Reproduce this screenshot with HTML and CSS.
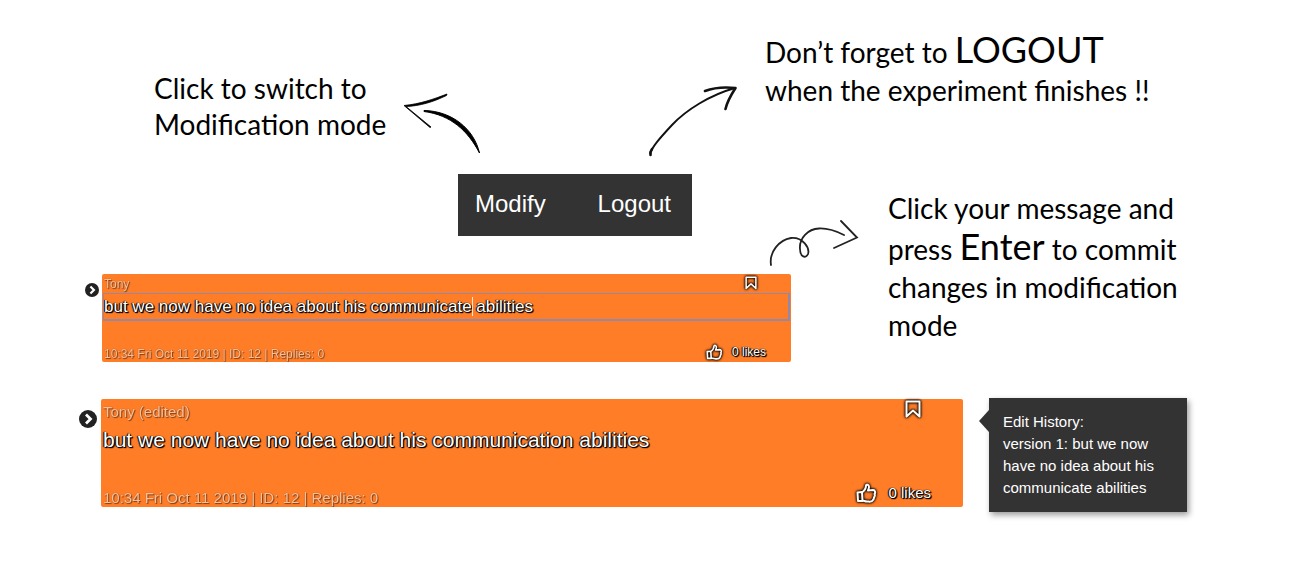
FILE: index.html
```html
<!DOCTYPE html>
<html lang="en">
<head>
<meta charset="utf-8">
<title>Modification mode guide</title>
<link rel="stylesheet" href="styles.css">
</head>
<body>
<main class="guide">
  <section class="tips">
    <p class="note note-switch">Click to switch to<br>Modification mode</p>
    <svg class="arrow arrow-left" width="80" height="64" viewBox="402 91 80 64" aria-hidden="true">
      <path d="M404 105.500C420 104 434 99 447 94L446.500 95.500C433 102 420 106 406 106.500L431 127L430 127.500Z" stroke="#000" stroke-width=".8"/>
      <path d="M424 110.500C452 111 474 129 479.500 153C468 131 451 115 424 111.500Z" stroke="#000" stroke-width="1"/>
    </svg>
    <svg class="arrow arrow-up" width="92" height="74" viewBox="648 85 92 74" aria-hidden="true">
      <path d="M650 154C652 147 659 139 672 125C686 110 710 95 735 88" fill="none" stroke="#111" stroke-width="1.900"/>
      <path d="M650.500 155V152L652 149M705 91C713 88 726 87 735.500 88C731 95 727 102 725.500 109" fill="none" stroke="#111" stroke-width="2.600" stroke-linecap="round" stroke-linejoin="round"/>
    </svg>
    <p class="note note-logout">Don’t forget to <span class="large">LOGOUT</span><br>when the experiment finishes !!</p>
  </section>

  <section class="editing">
    <nav class="toolbar">
      <a href="#modify">Modify</a>
      <a href="#logout">Logout</a>
    </nav>
    <svg class="arrow arrow-loop" width="92" height="48" viewBox="768 220 92 48" aria-hidden="true">
      <path d="M771 265C769 252 779 240 791 238C803 237 810 248 808 254C806 259 800 257 800 249C799 238 808 229 819 228.500C829 228 838 232 844 235" fill="none" stroke="#222" stroke-width="1.800" stroke-linecap="round"/>
      <path d="M841 221L857 237.500L834 248" fill="none" stroke="#222" stroke-width="1.800" stroke-linecap="round"/>
    </svg>
    <p class="note note-commit">Click your message and<br>press <span class="large">Enter</span> to commit<br>changes in modification<br>mode</p>
    <div class="entry entry-small">
      <button class="expand" aria-label="Expand message">
        <svg viewBox="0 0 18 18"><circle cx="9" cy="9" r="9" fill="#222"/><path d="M7 4.500L11.500 9L7 13.500" fill="none" stroke="#fff" stroke-width="2.800"/></svg>
      </button>
      <article class="card">
        <header class="card-head"><span class="faint">Tony</span>
          <button class="bookmark" aria-label="Bookmark"><svg viewBox="0 0 16 18"><path d="M1.500 1.500H14.500V16.500L8 10.500L1.500 16.500Z"/></svg></button>
        </header>
        <div class="field">
          <input class="message" type="text" aria-label="Message" value="but we now have no idea about his communicate abilities">
          <span class="caret"></span>
        </div>
        <footer class="card-foot"><span class="faint">10:34 Fri Oct 11 2019 | ID: 12 | Replies: 0</span>
          <button class="likes"><svg viewBox="0 0 20 20"><path d="M1.500 9.500L6 9L6.500 18H2ZM6 9.500C8 8 10 6 10 2.500C10.500 1 13 1.500 13 4C13 5.500 12 7 12 7.500L17 7C19.500 7 19.500 10 18.500 11C19.500 12.500 18.500 13.500 18 14.500C18 16 17.500 16.500 17 17C16 19.500 13 18.500 11 18.500C9 18.500 8 17.500 6.500 17.500"/></svg><span>0 likes</span></button>
        </footer>
      </article>
    </div>
  </section>

  <section class="result">
    <div class="entry entry-big">
      <button class="expand" aria-label="Expand message">
        <svg viewBox="0 0 18 18"><circle cx="9" cy="9" r="9" fill="#222"/><path d="M7 4.500L11.500 9L7 13.500" fill="none" stroke="#fff" stroke-width="2.800"/></svg>
      </button>
      <article class="card">
        <header class="card-head"><span class="faint">Tony (edited)</span>
          <button class="bookmark" aria-label="Bookmark"><svg viewBox="0 0 16 18"><path d="M1.500 1.500H14.500V16.500L8 10.500L1.500 16.500Z"/></svg></button>
        </header>
        <p class="message">but we now have no idea about his communication abilities</p>
        <footer class="card-foot"><span class="faint">10:34 Fri Oct 11 2019 | ID: 12 | Replies: 0</span>
          <button class="likes"><svg viewBox="0 0 20 20"><path d="M1.500 9.500L6 9L6.500 18H2ZM6 9.500C8 8 10 6 10 2.500C10.500 1 13 1.500 13 4C13 5.500 12 7 12 7.500L17 7C19.500 7 19.500 10 18.500 11C19.500 12.500 18.500 13.500 18 14.500C18 16 17.500 16.500 17 17C16 19.500 13 18.500 11 18.500C9 18.500 8 17.500 6.500 17.500"/></svg><span>0 likes</span></button>
        </footer>
      </article>
    </div>
    <aside class="history">Edit History:<br>version 1: but we now have no idea about his communicate abilities</aside>
  </section>
</main>
</body>
</html>
```
FILE: styles.css
```css
* { box-sizing: border-box; }
body {
  margin: 0;
  background: #fff;
  color: #000;
  font-family: "Liberation Sans", Arial, sans-serif;
}
p { margin: 0; }
button {
  padding: 0;
  border: 0;
  background: none;
  color: inherit;
  font: inherit;
  cursor: pointer;
}
svg { display: block; }

.guide { padding-bottom: 40px; }

.note {
  font-family: "Ink Free", Lato, sans-serif;
  font-size: 28px;
  line-height: 38px;
  white-space: nowrap;
}
.large { font-size: 36px; }

.tips {
  display: grid;
  grid-template-columns: minmax(0, 248fr) minmax(0, 246fr) minmax(0, 117fr) minmax(0, 535fr);
  padding-left: 154px;
  align-items: start;
  min-height: 174px;
}
.note-switch { padding-top: 70px; line-height: 36px; }
.arrow-left { margin-top: 91px; }
.arrow-up { margin-top: 85px; }
.note-logout { padding-top: 30px; }

.editing {
  display: grid;
  grid-template-columns: minmax(0, 768fr) minmax(0, 23fr) minmax(0, 97fr) minmax(0, 412fr);
  grid-template-rows: 100px auto;
}
.toolbar {
  grid-area: 1 / 1;
  justify-self: end;
  align-self: start;
  display: flex;
  justify-content: space-between;
  width: 234px;
  margin-right: 76px;
  padding: 0 21px 2px 17px;
  background: #333;
  line-height: 60px;
  font-size: 24px;
}
.toolbar a { color: #fff; text-decoration: none; }
.arrow-loop { grid-area: 1 / 2 / 2 / 4; align-self: end; margin-bottom: 6px; }
.note-commit { grid-area: 1 / 4 / 3 / 5; padding-top: 15px; }
.entry-small { grid-area: 2 / 1 / 3 / 3; }

.entry { display: flex; align-items: flex-start; }
.card {
  flex: 1;
  display: flex;
  flex-direction: column;
  border-radius: 2px;
  background: #ff7d27;
  color: #fff;
}
.card-head, .card-foot { display: flex; justify-content: space-between; }
.card-foot { margin-top: auto; align-items: flex-end; }
.faint {
  color: #fff;
  opacity: 0.5;
  text-shadow: 0 0 1px #000, 1px 1px 1px #000;
}
.message, .likes { text-shadow: 0 0 1px #000, 1px 1px 1px #000, -1px 0 1px #000, 1px 1px 1px #000; }
.likes { display: flex; align-items: center; }
.likes svg, .bookmark svg {
  overflow: visible;
  fill: none;
  stroke: #fff;
  stroke-width: 2;
  stroke-linejoin: round;
  filter: drop-shadow(0 0 1px #000) drop-shadow(0 0 1px #000);
}

.entry-small { padding-left: 85px; gap: 3px; }
.entry-small .expand { width: 14px; margin-top: 9px; }
.entry-small .card { min-height: 88px; font-size: 12px; }
.entry-small .card-head { height: 19px; padding: 0 34px 0 2px; line-height: 21px; }
.entry-small .bookmark { width: 12px; height: 17px; }
.field { position: relative; padding: 0 1px; }
.field .message {
  display: block;
  width: 100%;
  height: 28px;
  padding: 0;
  border: 1px solid #9488a8;
  border-right-width: 2px;
  border-bottom-width: 2px;
  background: transparent;
  color: #fff;
  font: 17px "Liberation Sans", Arial, sans-serif;
  outline: 0;
}
.caret {
  position: absolute;
  top: 4px;
  left: 370px;
  width: 1px;
  height: 19px;
  background: #ffffffcc;
}
.entry-small .card-foot { padding: 0 25px 0 2px; line-height: 15px; }
.entry-small .likes { gap: 10px; padding-bottom: 2px; }
.entry-small .likes svg { width: 16px; }

.result {
  display: grid;
  grid-template-columns: minmax(0, 963fr) minmax(0, 26fr) minmax(0, 198fr) minmax(0, 113fr);
  align-items: start;
  padding-top: 36px;
}
.entry-big { padding: 1px 0 0 79px; gap: 4px; }
.entry-big .expand { width: 18px; margin-top: 11px; }
.entry-big .card { min-height: 108px; font-size: 15px; }
.entry-big .card-head { height: 27px; padding: 0 42px 0 2px; line-height: 25px; }
.entry-big .bookmark { width: 16px; height: 20px; }
.entry-big .message { padding-left: 2px; font-size: 21px; line-height: 27px; }
.entry-big .card-foot { padding: 0 32px 0 2px; line-height: 18px; }
.entry-big .likes { gap: 12px; padding-bottom: 4px; }
.entry-big .likes svg { width: 20px; }

.history {
  position: relative;
  grid-column: 3;
  padding: 13px 14px;
  background: #333;
  box-shadow: 2px 3px 6px #00000066;
  color: #fff;
  font-size: 15px;
  line-height: 22px;
}
.history::before {
  content: "";
  position: absolute;
  top: 12px;
  left: -10px;
  border: 11px solid transparent;
  border-right: 10px solid #333;
  border-left: 0;
}
```
